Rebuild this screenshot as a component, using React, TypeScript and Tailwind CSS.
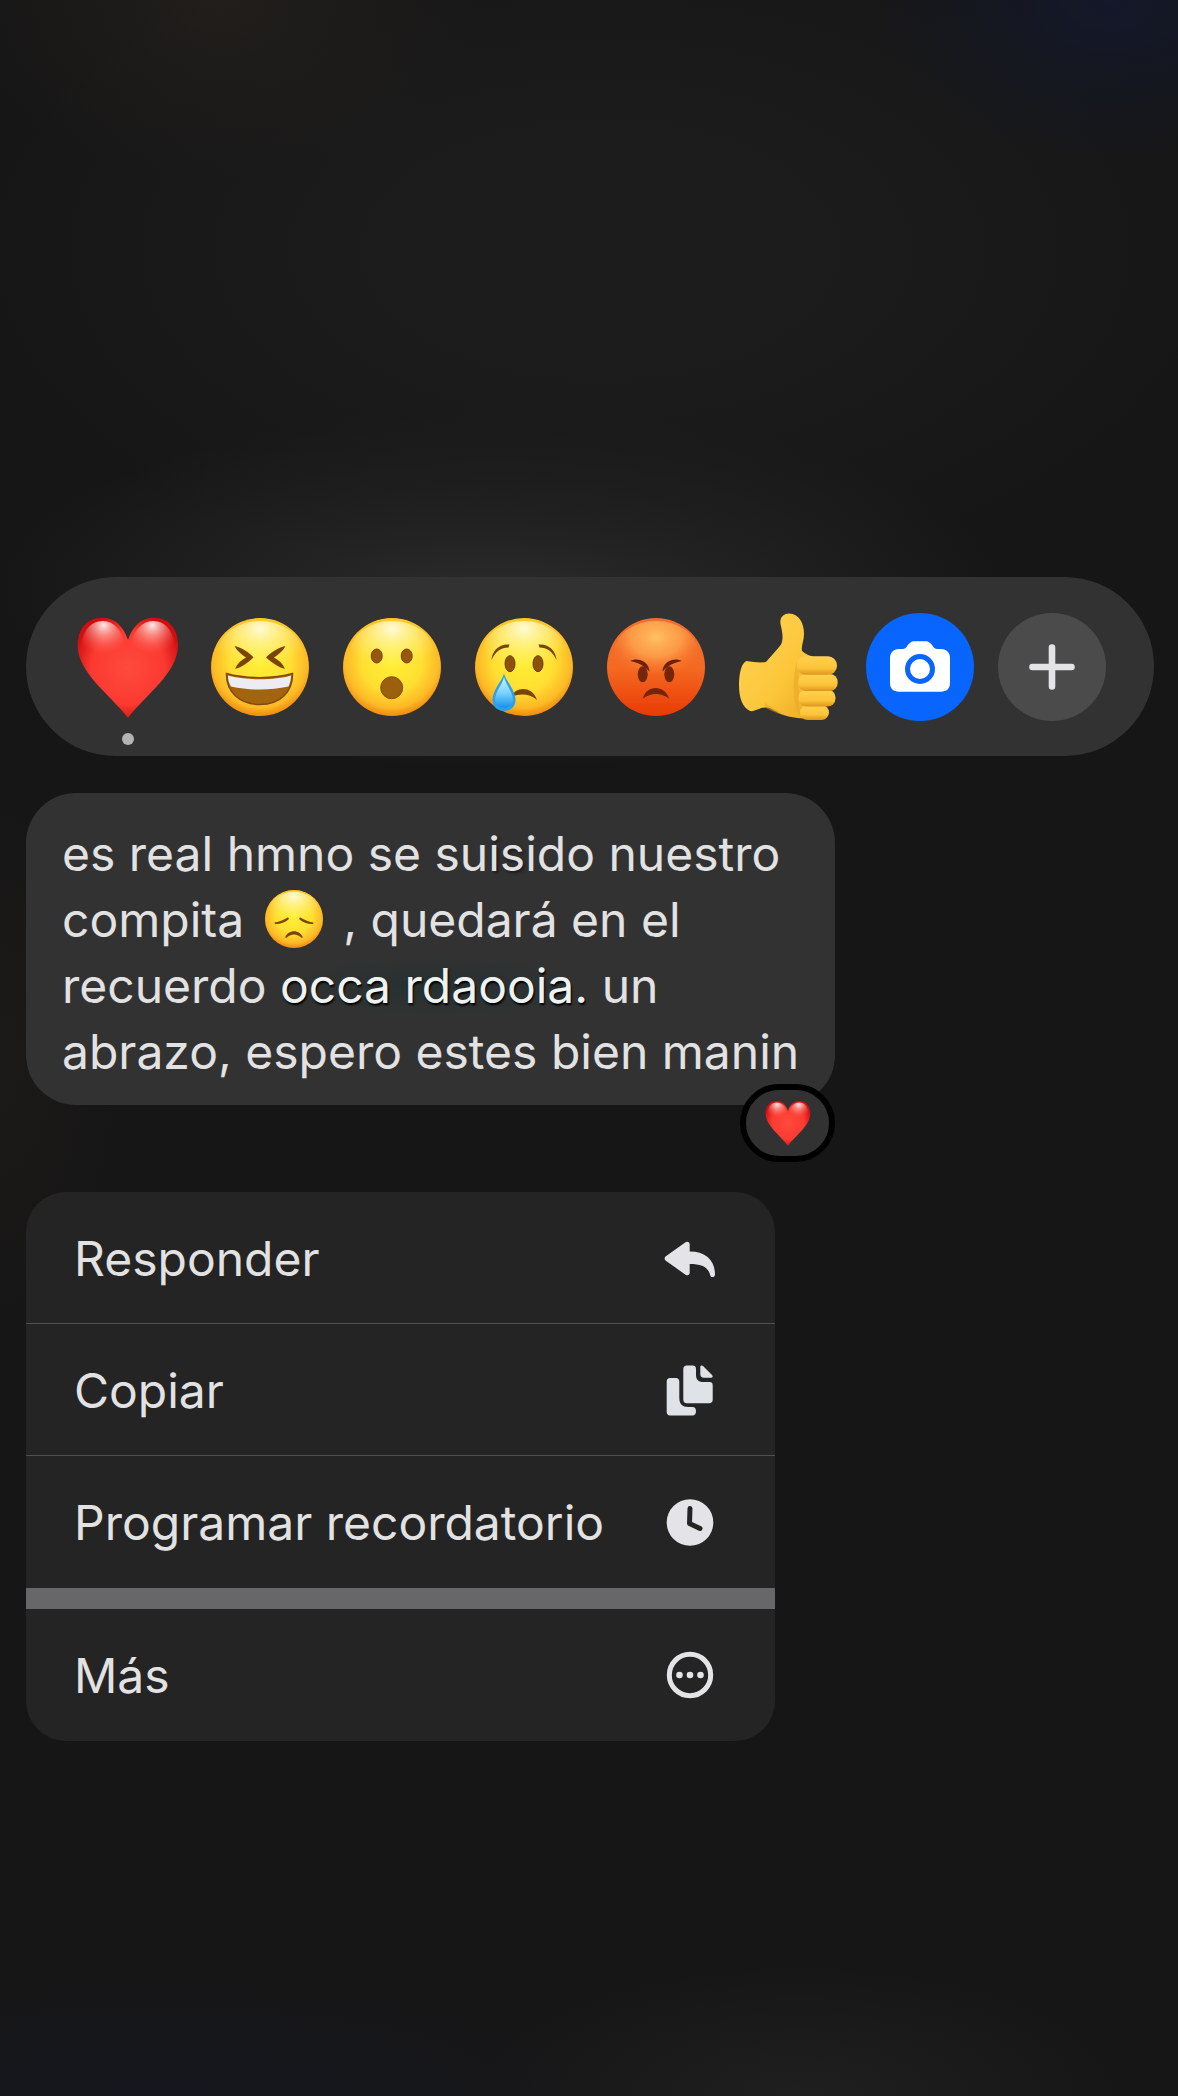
import type { ReactNode } from 'react'

interface Reaction {
  id: string
  label: string
  icon: ReactNode
  selected?: boolean
}

interface MenuItem {
  id: string
  label: string
  icon: ReactNode
}

function HeartEmoji({ className }: { className: string }) {
  return (
    <svg viewBox="0 0 108 108" className={className} aria-hidden="true">
      <defs>
        <radialGradient id="heartFill" cx="0.5" cy="0.5" r="0.56">
          <stop offset="0" stopColor="#ff4a3d" />
          <stop offset="0.65" stopColor="#fb3a31" />
          <stop offset="1" stopColor="#cf0e10" />
        </radialGradient>
        <radialGradient id="heartShine" cx="0.5" cy="0.1" r="0.7">
          <stop offset="0" stopColor="#ffffff" stopOpacity="0.9" />
          <stop offset="0.4" stopColor="#ffb0a8" stopOpacity="0.6" />
          <stop offset="1" stopColor="#ff5a50" stopOpacity="0" />
        </radialGradient>
      </defs>
      <path
        d="M54 27C49 12 40 4.700 28 4.700C13 4.700 3.700 16 3.700 32C3.700 60 35 80 54 105C73 80 104 60 104 32C104 16 95 4.700 80 4.700C68 4.700 59 12 54 27Z"
        fill="url(#heartFill)"
      />
      <path d="M51 32C48 17 40 8 29 8C16 8 8 19 8 33C8 40 10 46 14 50C22 44 38 40 51 32Z" fill="url(#heartShine)" />
      <path d="M57 32C60 17 68 8 79 8C92 8 100 19 100 33C100 40 98 46 94 50C86 44 70 40 57 32Z" fill="url(#heartShine)" />
    </svg>
  )
}

function Face({ className, children, angry = false }: { className: string; children: ReactNode; angry?: boolean }) {
  return (
    <svg viewBox="0 0 108 108" className={className} aria-hidden="true">
      <defs>
        <linearGradient id="yellowRim" x1="0" y1="0" x2="0" y2="1">
          <stop offset="0" stopColor="#ffc824" />
          <stop offset="0.5" stopColor="#f8a31c" />
          <stop offset="1" stopColor="#f08c10" />
        </linearGradient>
        <radialGradient id="yellowFill" cx="0.5" cy="0.44" r="0.57">
          <stop offset="0" stopColor="#ffef36" />
          <stop offset="0.55" stopColor="#ffdf32" />
          <stop offset="0.85" stopColor="#fdbd28" stopOpacity="0.9" />
          <stop offset="1" stopColor="#f8a31c" stopOpacity="0" />
        </radialGradient>
        <radialGradient id="faceShine" cx="0.5" cy="0.12" r="0.62">
          <stop offset="0" stopColor="#fffce0" stopOpacity="0.95" />
          <stop offset="0.45" stopColor="#fff6a0" stopOpacity="0.6" />
          <stop offset="1" stopColor="#fff27a" stopOpacity="0" />
        </radialGradient>
        <linearGradient id="redFill" x1="0" y1="0" x2="0" y2="1">
          <stop offset="0" stopColor="#f07030" />
          <stop offset="0.5" stopColor="#f46a22" />
          <stop offset="1" stopColor="#ea3a05" />
        </linearGradient>
        <radialGradient id="redShine" cx="0.5" cy="0.25" r="0.62">
          <stop offset="0" stopColor="#ffc062" />
          <stop offset="0.5" stopColor="#ffa850" stopOpacity="0.75" />
          <stop offset="1" stopColor="#f87028" stopOpacity="0" />
        </radialGradient>
      </defs>
      <circle cx="54" cy="54" r="49" fill={angry ? 'url(#redFill)' : 'url(#yellowRim)'} />
      {!angry && <circle cx="54" cy="54" r="48.500" fill="url(#yellowFill)" />}
      <ellipse cx="54" cy="40" rx="42" ry="32" fill={angry ? 'url(#redShine)' : 'url(#faceShine)'} />
      {children}
    </svg>
  )
}

function LaughEmoji() {
  return (
    <Face className="size-[108px]">
      <path d="M28.500 33C36 35 43 39 47.500 44.500C42 50 36 54 29 56C31 51 35 47 40 44.500C35 41 31 38 28.500 33Z" fill="#7a4406" />
      <path d="M79.500 33C72 35 65 39 60 44.500C66 50 72 54 79 56C77 51 73 47 68 44.500C73 41 77 38 79.500 33Z" fill="#7a4406" />
      <path d="M20.500 60.500C40 66 68 66 86.500 60.500C87 79 74 91.500 54 91.500C34 91.500 20 79 20.500 60.500Z" fill="#a3640f" />
      <path d="M22 62.500C40 67.500 68 67.500 85 62.500C85 67 84 70 82.500 73.500C64 77.500 44 77.500 25 73.500C23 70 22 67 22 62.500Z" fill="#ececf2" />
      <path d="M20.500 60.500C40 66 68 66 86.500 60.500C87 79 74 91.500 54 91.500C34 91.500 20 79 20.500 60.500Z" fill="none" stroke="#82490a" strokeWidth="1.500" />
    </Face>
  )
}

function WowEmoji() {
  return (
    <Face className="size-[108px]">
      <ellipse cx="38.700" cy="43" rx="5.500" ry="7" fill="#965810" stroke="#7a4208" />
      <ellipse cx="68.700" cy="43" rx="5.500" ry="7" fill="#965810" stroke="#7a4208" />
      <circle cx="53.700" cy="74.700" r="11" fill="#9c5f0e" stroke="#84500c" />
    </Face>
  )
}

function CryEmoji() {
  return (
    <Face className="size-[108px]">
      <defs>
        <linearGradient id="tear" x1="0" y1="0" x2="0" y2="1">
          <stop offset="0" stopColor="#c8f1ff" />
          <stop offset="0.5" stopColor="#7dd3fb" />
          <stop offset="1" stopColor="#1590ea" />
        </linearGradient>
      </defs>
      <ellipse cx="40" cy="50.700" rx="5" ry="8" fill="#8a520d" stroke="#723e06" />
      <ellipse cx="68" cy="50.700" rx="5" ry="8" fill="#8a520d" stroke="#723e06" />
      <path d="M21.500 47C22 38 29 30.500 39.500 31.500L38.500 34.500C31 34.500 25.500 38.500 21.500 47Z" fill="#7a4406" />
      <path d="M86.500 47C86 38 79 30.500 68.500 31.500L69.500 34.500C77 34.500 82.500 38.500 86.500 47Z" fill="#7a4406" />
      <path d="M42 84C44 74 62 72 67 87C60 81 50 80 42 84Z" fill="#7a4406" />
      <path d="M34 60.500C36 68 45.500 77 45.500 87C45.500 94 40 98 34 98C28 98 22.500 94 22.500 87C22.500 77 32 68 34 60.500Z" fill="#2ba0ee" />
      <path d="M34 64C35.500 71 43 79 43 87C43 92 39 95 34 95C29 95 25 92 25 87C25 79 32.500 71 34 64Z" fill="url(#tear)" />
    </Face>
  )
}

function AngryEmoji() {
  return (
    <Face className="size-[108px]" angry>
      <ellipse cx="40.700" cy="61.300" rx="5" ry="8" fill="#75250a" />
      <ellipse cx="67.300" cy="61.300" rx="5" ry="8" fill="#75250a" />
      <path d="M28.500 48C35 44 47 48 47.500 58.500C42 52.500 36 49.500 28.500 48Z" fill="#6b2008" />
      <path d="M79.500 48C73 44 61 48 60.500 58.500C66 52.500 72 49.500 79.500 48Z" fill="#6b2008" />
      <path d="M41 85.500C44 71.500 63 71.500 67 85.500C59 79.500 49 79.500 41 85.500Z" fill="#75250a" />
    </Face>
  )
}

function ThumbEmoji() {
  return (
    <svg viewBox="0 0 108 108" className="size-[108px]" aria-hidden="true">
      <defs>
        <linearGradient id="skin" x1="0" y1="0" x2="1" y2="1">
          <stop offset="0" stopColor="#ffd556" />
          <stop offset="0.6" stopColor="#fcc63a" />
          <stop offset="1" stopColor="#eaa522" />
        </linearGradient>
        <linearGradient id="finger" x1="0" y1="0" x2="0" y2="1">
          <stop offset="0" stopColor="#ffd250" />
          <stop offset="0.65" stopColor="#fbc338" />
          <stop offset="1" stopColor="#dc951c" />
        </linearGradient>
      </defs>
      <path
        d="M12.500 48C19 49 26 50 32 49C37 43 43 37 47 31.500C50 25 48 18 46.500 11C45.500 4 50 0.500 55 0.500C65 1 70 10 70 21C70 28 67 33 68 38C71 41 76 43 80 44L84 106C70 106 56 105 47 101C40 98 36 94 31 94.500C25 95 21 99 16 98C8 94 5 84 5 72C5 62 7 50 12.500 48Z"
        fill="url(#skin)"
      />
      <path d="M63 48C67 60 63 80 66 103C58 92 58 66 63 48Z" fill="#e9a828" opacity="0.6" />
      <path d="M31 94C33 96 44 101 52 103C43 97 37 94 31 90Z" fill="#e3a023" opacity="0.5" />
      <rect x="66" y="92" width="29" height="15" rx="7.500" fill="url(#finger)" />
      <rect x="64.500" y="76.500" width="37" height="17" rx="8" fill="url(#finger)" />
      <rect x="64" y="61" width="39.700" height="17" rx="8" fill="url(#finger)" />
      <rect x="62.700" y="43.300" width="40.300" height="18.500" rx="9" fill="url(#finger)" />
    </svg>
  )
}

function SadEmoji() {
  return (
    <Face className="mx-1 inline-block size-16 align-[-14px]">
      <path d="M21 60C28 59 36 56 44 51L45.500 54C39 60 30 63 22 62.500Z" fill="#7a4406" />
      <path d="M87 60C80 59 72 56 64 51L62.500 54C69 60 78 63 86 62.500Z" fill="#7a4406" />
      <path d="M39 85C44 71 64 71 69 85L67 86C60 78 48 78 41 86Z" fill="#7a4406" />
    </Face>
  )
}

function CameraIcon() {
  return (
    <svg viewBox="0 0 108 108" className="size-[108px] rounded-full bg-[#0866ff]" aria-hidden="true">
      <path
        d="M33 36H37C40.500 36 41 32 44 30C45.500 28.500 47 28.300 49 28.300H59C61 28.300 62.500 28.500 64 30C67 32 67.500 36 71 36H75C81 36 84 40 84 45V70C84 75.500 80.500 78.700 75 78.700H33C27.500 78.700 24 75.500 24 70V45C24 40 27 36 33 36Z"
        fill="#ffffff"
      />
      <circle cx="54" cy="56" r="12.500" fill="none" stroke="#0866ff" strokeWidth="5" />
    </svg>
  )
}

function PlusIcon() {
  return (
    <svg viewBox="0 0 108 108" className="size-[108px] rounded-full bg-[#4b4b4b]" aria-hidden="true">
      <path d="M54 34.500V73.500M34.500 54H73.500" stroke="#e4e4e6" strokeWidth="6.600" strokeLinecap="round" />
    </svg>
  )
}

function ReplyIcon() {
  return (
    <svg viewBox="0 0 52 52" className="size-[52px]" fill="#e4e4e8" aria-hidden="true">
      <path d="M1.500 24.500L21.500 10.300C23.500 9 25.700 10 25.700 12.300V19.500C41 19.500 51 27.500 51 42.500C51 45.500 47 46 46.200 43.200C44 34.500 37.500 32 25.700 32V40.800C25.700 43.200 23.500 44 21.500 42.700L1.500 28.500C0.300 27.500 0.300 25.500 1.500 24.500Z" />
    </svg>
  )
}

function CopyIcon() {
  return (
    <svg viewBox="0 0 52 52" className="size-[52px]" fill="#dfe3e8" aria-hidden="true">
      <path d="M6 14H12C14 14 15.300 15.500 15.300 17.500V34C15.300 40 18.500 43 24 43H28.500C31 43 32 45 32 47C32 49.500 31 51.500 28.500 51.500H6C4 51.500 2.700 50 2.700 48V17.500C2.700 15.500 4 14 6 14Z" />
      <path d="M23 1.400H28.500C31 1.400 32 2.600 32 5V11C32 15.500 34.500 18 39 18H45.500C47.700 18 48.700 19 48.700 21V35.500C48.700 38 47.500 39.200 45 39.200H23C20.500 39.200 19.300 38 19.300 35.500V5C19.300 2.600 20.500 1.400 23 1.400Z" />
      <path d="M36.300 3C36.300 1.500 37.700 1 39 2L48 11C49.300 12.400 48.700 13.700 47 13.700H40C37.500 13.700 36.300 12.500 36.300 10Z" />
    </svg>
  )
}

function ClockIcon() {
  return (
    <svg viewBox="0 0 52 52" className="size-[52px]" fill="none" aria-hidden="true">
      <circle cx="26" cy="26.500" r="23.300" fill="#e4e4e8" />
      <path d="M26 12.500L25.500 27.500L36 32.500" stroke="#242424" strokeWidth="5" strokeLinecap="round" strokeLinejoin="round" />
    </svg>
  )
}

function MoreIcon() {
  return (
    <svg viewBox="0 0 52 52" className="size-[52px]" fill="#e4e4e6" aria-hidden="true">
      <circle cx="26" cy="26" r="20.700" fill="none" stroke="#e4e4e6" strokeWidth="5" />
      <circle cx="15.500" cy="26" r="3.300" />
      <circle cx="26" cy="26" r="3.300" />
      <circle cx="36.500" cy="26" r="3.300" />
    </svg>
  )
}

const reactions: Reaction[] = [
  { id: 'love', label: 'Me encanta', icon: <HeartEmoji className="size-[108px]" />, selected: true },
  { id: 'haha', label: 'Me divierte', icon: <LaughEmoji /> },
  { id: 'wow', label: 'Me asombra', icon: <WowEmoji /> },
  { id: 'sad', label: 'Me entristece', icon: <CryEmoji /> },
  { id: 'angry', label: 'Me enoja', icon: <AngryEmoji /> },
  { id: 'like', label: 'Me gusta', icon: <ThumbEmoji /> },
  { id: 'camera', label: 'Cámara', icon: <CameraIcon /> },
  { id: 'add', label: 'Agregar', icon: <PlusIcon /> },
]

const menuItems: MenuItem[] = [
  { id: 'reply', label: 'Responder', icon: <ReplyIcon /> },
  { id: 'copy', label: 'Copiar', icon: <CopyIcon /> },
  { id: 'remind', label: 'Programar recordatorio', icon: <ClockIcon /> },
]

function MenuRow({ item }: { item: MenuItem }) {
  return (
    <button type="button" className="flex h-33 w-full items-center justify-between pr-[59px] pl-12 text-left">
      <span className="pt-0.5">{item.label}</span>
      {item.icon}
    </button>
  )
}

function App() {
  return (
    <main className="min-h-screen bg-[#161616] bg-[radial-gradient(240px_160px_at_1110px_0px,#13182a,transparent),radial-gradient(260px_180px_at_220px_0px,#211e1b,transparent),radial-gradient(620px_340px_at_600px_250px,#1c1c1c_30%,transparent),radial-gradient(500px_180px_at_500px_590px,#2b2b2b,transparent),radial-gradient(120px_260px_at_0px_1060px,#1c1a18,transparent),radial-gradient(320px_130px_at_800px_100%,#1f1f1f,transparent),radial-gradient(480px_120px_at_160px_100%,#15171e,transparent)] bg-no-repeat pt-[577px] pr-6 pb-16 pl-[26px] font-['Inter','Noto_Sans',sans-serif] text-[48px] leading-[66px] text-[#e2e2e2]">
      {/* reacciones */}
      <div className="flex h-[179px] items-center justify-between rounded-full bg-[#323232] px-12">
        {reactions.map((reaction) => (
          <button key={reaction.id} type="button" aria-label={reaction.label} className="relative">
            {reaction.icon}
            {reaction.selected && (
              <span className="absolute -bottom-6 left-1/2 size-3 -translate-x-1/2 rounded-full bg-[#b4b4b4]" />
            )}
          </button>
        ))}
      </div>

      {/* mensaje */}
      <div className="relative mt-[37px] w-fit rounded-[50px] bg-[#323232] px-9 pt-7 pb-5 whitespace-nowrap">
        <p>
          es real hmno se su
          <span className="[text-shadow:2px_2px_3px_#1c1a20]">is</span>
          ido nuestro
          <br />
          compita <SadEmoji /> , quedará en el
          <br />
          recuerdo{' '}
          <span className="bg-[radial-gradient(closest-side,#26302f,transparent)] text-[#eef3f2] [text-shadow:1px_2px_2px_#000]">
            occa rdaooia.
          </span>{' '}
          un
          <br />
          abrazo, espero estes bien manin
        </p>
        <button
          type="button"
          aria-label="Me encanta"
          className="absolute right-0 -bottom-[57px] flex h-[78px] w-[95px] items-center justify-center rounded-full border-6 border-black bg-[#323232]"
        >
          <HeartEmoji className="size-12" />
        </button>
      </div>

      {/* acciones */}
      <div className="mt-[87px] w-[749px] max-w-full overflow-hidden rounded-[40px] bg-[#242424]">
        <div className="divide-y divide-[#505050]">
          {menuItems.map((item) => (
            <MenuRow key={item.id} item={item} />
          ))}
        </div>
        <div className="h-[21px] bg-[#67676a]" />
        <MenuRow item={{ id: 'more', label: 'Más', icon: <MoreIcon /> }} />
      </div>
    </main>
  )
}

export default App
